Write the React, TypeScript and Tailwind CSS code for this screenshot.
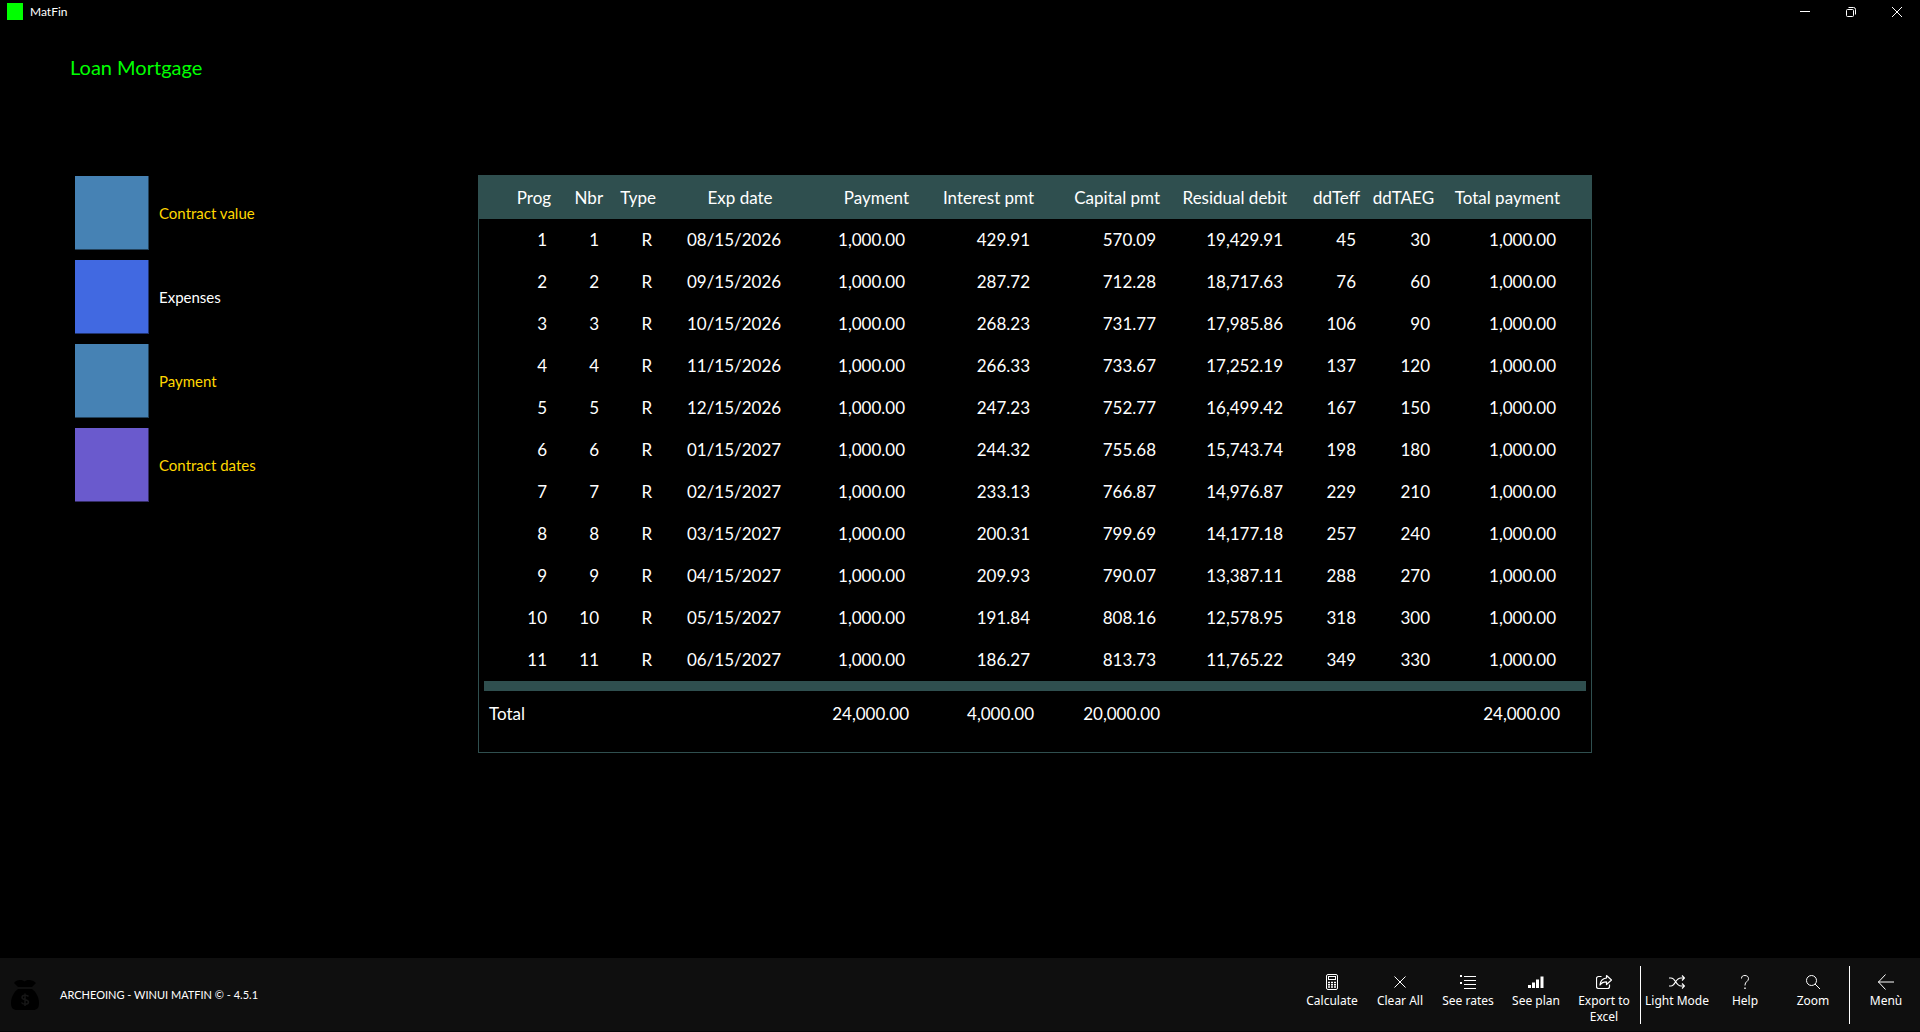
import React from "react";

type Row = [number, string, string, string, string, number, number];

const rows: Row[] = [
  [1, "08/15/2026", "429.91", "570.09", "19,429.91", 45, 30],
  [2, "09/15/2026", "287.72", "712.28", "18,717.63", 76, 60],
  [3, "10/15/2026", "268.23", "731.77", "17,985.86", 106, 90],
  [4, "11/15/2026", "266.33", "733.67", "17,252.19", 137, 120],
  [5, "12/15/2026", "247.23", "752.77", "16,499.42", 167, 150],
  [6, "01/15/2027", "244.32", "755.68", "15,743.74", 198, 180],
  [7, "02/15/2027", "233.13", "766.87", "14,976.87", 229, 210],
  [8, "03/15/2027", "200.31", "799.69", "14,177.18", 257, 240],
  [9, "04/15/2027", "209.93", "790.07", "13,387.11", 288, 270],
  [10, "05/15/2027", "191.84", "808.16", "12,578.95", 318, 300],
  [11, "06/15/2027", "186.27", "813.73", "11,765.22", 349, 330],
];

const steps = [
  { label: "Contract value", tile: "bg-[#4682b4] border-[#23415a]", text: "text-[#ffd700]" },
  { label: "Expenses", tile: "bg-[#4169e1] border-[#203470]", text: "text-white" },
  { label: "Payment", tile: "bg-[#4682b4] border-[#23415a]", text: "text-[#ffd700]" },
  { label: "Contract dates", tile: "bg-[#6a5acd] border-[#352d66]", text: "text-[#ffd700]" },
];

function TitleBar() {
  return (
    <header className="flex h-[23px] items-center pl-[7px]">
      <span className="h-[17px] w-4 bg-[#00ff00]" />
      <span className="ml-[7px] text-[12px]">MatFin</span>
      <div className="ml-auto flex">
        <button aria-label="Minimize" className="grid h-[23px] w-[46px] place-items-center">
          <svg width="10" height="10" viewBox="0 0 10 10" stroke="currentColor" fill="none"><path d="M0 4.5h10" /></svg>
        </button>
        <button aria-label="Restore" className="grid h-[23px] w-[46px] place-items-center">
          <svg width="10" height="10" viewBox="0 0 10 10" stroke="currentColor" fill="none">
            <rect x=".5" y="2.5" width="7" height="7" rx="1" />
            <path d="M2.5 .5h5a2 2 0 0 1 2 2v5" />
          </svg>
        </button>
        <button aria-label="Close" className="grid h-[23px] w-[46px] place-items-center">
          <svg width="10" height="10" viewBox="0 0 10 10" stroke="currentColor" fill="none"><path d="M0 0l10 10M10 0L0 10" /></svg>
        </button>
      </div>
    </header>
  );
}

function Plan() {
  const head = "pr-1 text-right font-normal";
  const cell = "pr-2 text-right";
  return (
    <section className="w-[58%] border border-[#2f4f4f] pb-[15px]">
      <table className="w-full table-fixed whitespace-nowrap text-[17px]">
        <colgroup>
          <col className="w-[76px]" />
          <col className="w-[52px]" />
          <col className="w-[53px]" />
          <col className="w-[160px]" />
          <col className="w-[93px]" />
          <col className="w-[125px]" />
          <col className="w-[126px]" />
          <col className="w-[127px]" />
          <col className="w-[73px]" />
          <col className="w-[74px]" />
          <col className="w-[126px]" />
          <col />
        </colgroup>
        <thead className="bg-[#2f4f4f]">
          <tr className="h-[43px]">
            <th className={head}>Prog</th>
            <th className={head}>Nbr</th>
            <th className={head}>Type</th>
            <th className="text-center font-normal">Exp date</th>
            <th className={head}>Payment</th>
            <th className={head}>Interest pmt</th>
            <th className={head}>Capital pmt</th>
            <th className={head}>Residual debit</th>
            <th className={head}>ddTeff</th>
            <th className={head}>ddTAEG</th>
            <th className={head}>Total payment</th>
            <th />
          </tr>
        </thead>
        <tbody>
          {rows.map(([n, date, interest, capital, residual, teff, taeg]) => (
            <tr key={n} className="h-[42px]">
              <td className={cell}>{n}</td>
              <td className={cell}>{n}</td>
              <td className={cell}>R</td>
              <td className="pr-3 text-center">{date}</td>
              <td className={cell}>1,000.00</td>
              <td className={cell}>{interest}</td>
              <td className={cell}>{capital}</td>
              <td className={cell}>{residual}</td>
              <td className={cell}>{teff}</td>
              <td className={cell}>{taeg}</td>
              <td className={cell}>1,000.00</td>
              <td />
            </tr>
          ))}
        </tbody>
        <tfoot>
          <tr>
            <td colSpan={12} className="px-[5px]">
              <div className="h-[10px] bg-[#2f4f4f]" />
            </td>
          </tr>
          <tr className="h-[46px]">
            <td colSpan={4} className="pl-[10px]">Total</td>
            <td className="pr-1 text-right">24,000.00</td>
            <td className="pr-1 text-right">4,000.00</td>
            <td className="pr-1 text-right">20,000.00</td>
            <td colSpan={3} />
            <td className="pr-1 text-right">24,000.00</td>
            <td />
          </tr>
        </tfoot>
      </table>
    </section>
  );
}

const svg = { width: 16, height: 16, viewBox: "0 0 16 16", fill: "none", stroke: "currentColor", strokeWidth: 1 };

const icons = {
  calculate: (
    <svg {...svg}>
      <rect x="2.5" y=".5" width="11" height="15" rx="1.5" />
      <rect x="4.5" y="2.5" width="7" height="3" />
      <path d="M4 8.5h2M7 8.5h2M10 8.5h2M4 10.75h2M7 10.75h2M10 10.75h2M4 13h2M7 13h2M10 13h2" strokeWidth="1.5" />
    </svg>
  ),
  clear: <svg {...svg}><path d="M2.5 2.5l11 11M13.5 2.5l-11 11" /></svg>,
  rates: (
    <svg {...svg}>
      <path d="M4 2.5h12M4 6.5h12M4 10.5h12M4 14.5h12" />
      <path d="M0 2h2M0 9h2" strokeWidth="2" />
    </svg>
  ),
  plan: (
    <svg {...svg} stroke="none" fill="currentColor">
      <path d="M0 11h3v3H0zM4 8.5h3V14H4zM8 5.5h3V14H8zM12.5 2.5h3V14h-3z" />
    </svg>
  ),
  share: (
    <svg {...svg} strokeWidth="1.2">
      <path d="M5.5 2.5h-3a2 2 0 0 0-2 2v8a2 2 0 0 0 2 2h9a2 2 0 0 0 2-2v-2" />
      <path d="M10.500 1.500l5 4.500-5 4.500v-2.700c-3 0-5 .7-6.500 3.200.3-4 2.500-6.500 6.500-7z" strokeLinejoin="round" />
    </svg>
  ),
  shuffle: (
    <svg {...svg} strokeWidth="1.200">
      <path d="M0 4h2c2 0 3 1 4.500 3.500S10 12 12 12h3.500M0 12h2c2 0 3-1.500 4.500-4S10 4 12 4h3.500M13 1.500L15.500 4 13 6.500M13 9.500l2.500 2.500-2.500 2.500" />
    </svg>
  ),
  help: (
    <svg {...svg}>
      <path d="M4.500 4.500C4.500 2 6 1.500 8 1.500s3.500 1.200 3.500 3.200C11.500 7.500 8 7.500 8 11v.5" />
      <path d="M7.300 14.300h1.400" strokeWidth="1.400" />
    </svg>
  ),
  zoom: <svg {...svg}><circle cx="6.500" cy="6.500" r="5" /><path d="M10 10l5 5" /></svg>,
  back: <svg {...svg}><path d="M0 8h16M7.500 .5L.5 8l7 7.500" /></svg>,
};

function Tool({ icon, label }: { icon: React.ReactNode; label: string }) {
  return (
    <button className="flex h-full w-[68px] flex-col items-center gap-[3px] pt-4 text-[12px] leading-4">
      {icon}
      <span>{label}</span>
    </button>
  );
}

function MoneyBag() {
  return (
    <svg width="28" height="30" viewBox="0 0 28 30" fill="#000">
      <path d="M3 3c2-3 7-4 10.500-1.500C17-1 22 0 25 3l-4 4H7z" />
      <path d="M7 9h14c4 3 7 8 7 14 0 5-2 7-6 7H6c-4 0-6-2-6-7C0 17 3 12 7 9z" />
      <path d="M17.500 16.500c-1-1.500-6.500-2-6.500 1s6.500 1.500 6.500 4.500-6 2.500-7 .5M14 13.500v12.500" fill="none" stroke="#161616" strokeWidth="1.500" />
    </svg>
  );
}

function CommandBar() {
  return (
    <footer className="flex h-[74px] items-center bg-[#0f0f0f] pl-[11px] shadow-[inset_0_-1px_#050505]">
      <MoneyBag />
      <span className="ml-[21px] text-[11px]">ARCHEOING - WINUI MATFIN © - 4.5.1</span>
      <div className="ml-auto flex h-full items-center font-['Noto_Sans','Open_Sans',sans-serif]">
        <Tool icon={icons.calculate} label="Calculate" />
        <Tool icon={icons.clear} label="Clear All" />
        <Tool icon={icons.rates} label="See rates" />
        <Tool icon={icons.plan} label="See plan" />
        <Tool icon={icons.share} label="Export to Excel" />
        <span className="mx-0.5 h-[58px] w-px bg-white" />
        <Tool icon={icons.shuffle} label="Light Mode" />
        <Tool icon={icons.help} label="Help" />
        <Tool icon={icons.zoom} label="Zoom" />
        <span className="mx-0.5 h-[58px] w-px bg-white" />
        <Tool icon={icons.back} label="Menù" />
      </div>
    </footer>
  );
}

export default function App() {
  return (
    <div className="flex min-h-screen flex-col bg-black font-[Lato,sans-serif] text-white">
      <TitleBar />
      <h1 className="mt-8 pl-[70px] text-[20px] leading-6 text-[#00ff00]">Loan Mortgage</h1>
      <main className="mt-24 flex flex-1 items-start">
        <nav className="flex w-[24.9%] flex-col gap-[10px] pt-px pl-[75px]">
          {steps.map((s) => (
            <button key={s.label} className={"flex items-center gap-[10px] text-left text-[15px] " + s.text}>
              <span className={"h-[74px] w-[74px] border-r border-b " + s.tile} />
              {s.label}
            </button>
          ))}
        </nav>
        <Plan />
      </main>
      <CommandBar />
    </div>
  );
}
